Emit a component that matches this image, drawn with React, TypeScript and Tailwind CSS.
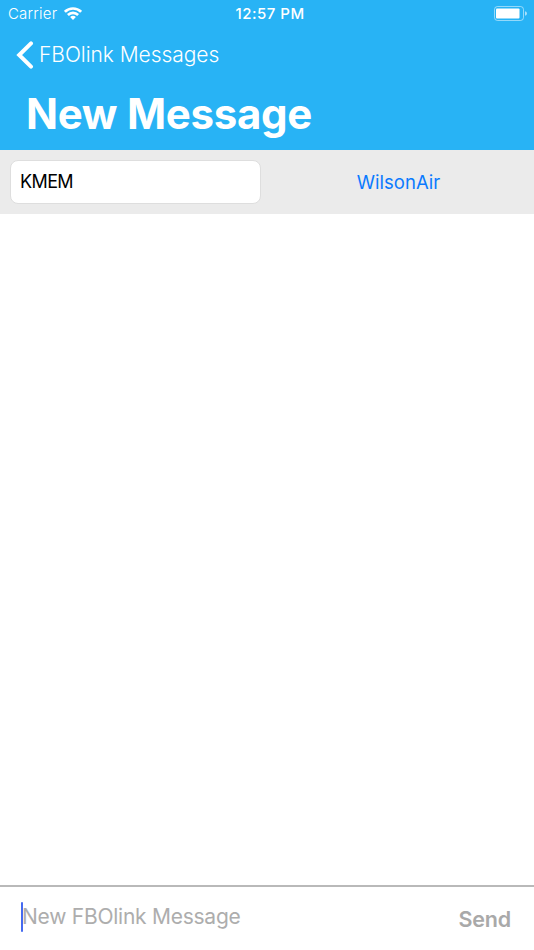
import React, { useState } from 'react';

function StatusBar() {
  return (
    <div className="grid h-7 grid-cols-3 items-center pr-[7px] pl-2 text-white">
      <div className="flex items-center gap-[7px]">
        <span className="text-[15px] font-light tracking-[0.2px]">Carrier</span>
        <svg viewBox="0 0 18 13" className="mb-[2px] h-[13px] w-[18px]" fill="none" stroke="currentColor" strokeWidth="2.6">
          <path d="M.9 4.8a11.5 11.5 0 0 1 16.2 0" />
          <path d="M3.9 8a7.2 7.2 0 0 1 10.2 0" />
          <path d="M9 13 6.1 10.1a4.2 4.2 0 0 1 5.8 0Z" fill="currentColor" stroke="none" />
        </svg>
      </div>
      <span className="pl-[5px] text-center text-[15px] font-medium tracking-[0.5px]">12:57 PM</span>
      <svg viewBox="0 0 33 15" className="mb-[2px] h-[15px] w-[33px] justify-self-end" fill="none">
        <rect x="0.5" y="0.5" width="29" height="14" rx="3" stroke="currentColor" strokeOpacity="0.5" />
        <rect x="2" y="2.5" width="23.5" height="10" rx="1" fill="currentColor" />
        <path d="M31 5.2v4.6q2-.5 2-2.3t-2-2.3Z" fill="currentColor" fillOpacity="0.6" />
      </svg>
    </div>
  );
}

export default function App() {
  const [airport, setAirport] = useState('KMEM');
  const [message, setMessage] = useState('');

  return (
    <div className="flex h-[950px] w-[534px] flex-col overflow-hidden bg-white font-['Inter',sans-serif]">
      {/* Header */}
      <header className="h-[150px] shrink-0 bg-[#28b3f5] text-white">
        <StatusBar />
        <button className="flex h-[54px] items-center gap-[5px] pl-4">
          <svg viewBox="0 0 18 28" className="h-7 w-[18px]" fill="none" stroke="currentColor" strokeWidth="4" strokeLinecap="round">
            <path d="M15 2.4 3.2 14 15 25.6" />
          </svg>
          <span className="text-[21px] font-light tracking-[-0.05px]">FBOlink Messages</span>
        </button>
        <h1 className="pl-[26px] text-[42px] leading-[64px] font-bold tracking-[-0.3px]">New Message</h1>
      </header>

      {/* Recipient */}
      <div className="flex h-16 shrink-0 items-center bg-[#ebebeb] pl-[10px]">
        <input
          value={airport}
          onChange={(e) => setAirport(e.target.value)}
          className="h-11 w-[251px] rounded-lg border border-[#dedede] bg-white px-[9px] pb-[2px] text-[18px] tracking-[-0.6px] text-black outline-none"
        />
        <button className="flex-1 pt-[2px] pl-[2px] text-center text-[18.5px] tracking-[0.05px] text-[#0a7aff]">WilsonAir</button>
      </div>

      <main className="flex-1" />

      {/* Composer */}
      <div className="flex h-[65px] shrink-0 items-center border-t-2 border-[#b9b9b9] pr-[23px] pl-[21px]">
        <span className="mb-1 h-[30px] w-[2px] shrink-0 rounded-full bg-[#456af0]" />
        <input
          value={message}
          onChange={(e) => setMessage(e.target.value)}
          placeholder="New FBOlink Message"
          className="mb-1 -ml-[1px] min-w-0 flex-1 text-[21px] tracking-[-0.25px] outline-none placeholder:text-[#adadad]"
        />
        <button className="pt-[2px] text-[21.5px] font-semibold tracking-[-0.2px] text-[#a9a9a9]">Send</button>
      </div>
    </div>
  );
}
